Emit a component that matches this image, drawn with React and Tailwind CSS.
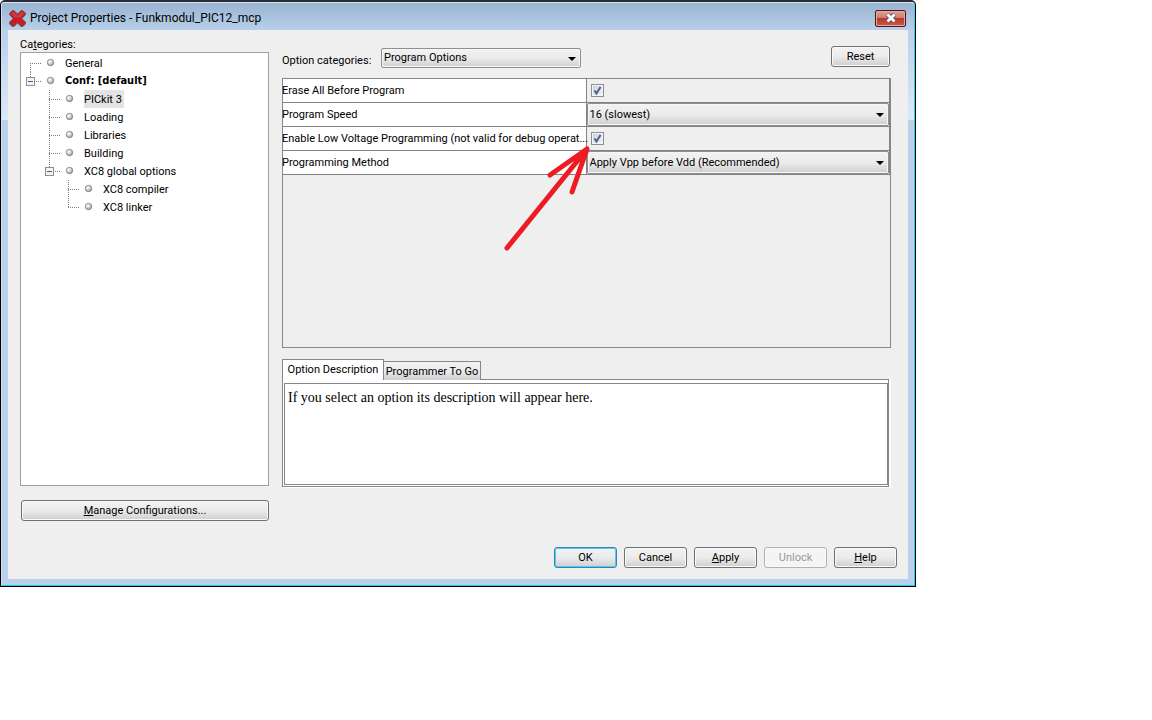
import { useState } from "react";

const tree = [
	{ label: "General", depth: 1, lines: [{ from: 9, to: 18 }] },
	{ label: "Conf: [default]", depth: 1, bold: true, expander: true, lines: [{ from: 0, to: 5 }] },
	{ label: "PICkit 3", depth: 2, lines: [null, { from: 0, to: 18 }] },
	{ label: "Loading", depth: 2, lines: [null, { from: 0, to: 18 }] },
	{ label: "Libraries", depth: 2, lines: [null, { from: 0, to: 18 }] },
	{ label: "Building", depth: 2, lines: [null, { from: 0, to: 18 }] },
	{ label: "XC8 global options", depth: 2, expander: true, lines: [null, { from: 0, to: 5 }] },
	{ label: "XC8 compiler", depth: 3, lines: [null, null, { from: 0, to: 18 }] },
	{ label: "XC8 linker", depth: 3, lines: [null, null, { from: 0, to: 10 }] },
];

const buttonClass =
	"h-[21px] rounded-[3px] border border-[#707070] bg-linear-to-b from-[#f2f2f2] from-0% via-[#ebebeb] via-50% to-[#cfcfcf] text-center leading-[18px] shadow-[inset_0_0_0_1px_#fafafa] disabled:border-[#adb2b5] disabled:from-[#f4f4f4] disabled:via-[#f4f4f4] disabled:to-[#f4f4f4] disabled:text-[#9a9a9a]";

function TreeGutter({ depth, lines, expander }) {
	const width = depth * 19;
	const x = (depth - 1) * 19 + 6;
	return (
		<svg width={width} height="18" className="shrink-0" shapeRendering="crispEdges" aria-hidden="true">
			<g stroke="#808080" strokeDasharray="1 1">
				{lines.map((line, i) =>
					line ? <line key={i} x1={i * 19 + 6.5} x2={i * 19 + 6.5} y1={line.from} y2={line.to} /> : null
				)}
				<line x1={expander ? x + 6 : x} x2={x + 12} y1="9.5" y2="9.5" />
			</g>
			{expander && (
				<g>
					<rect x={x - 3.5} y="5.5" width="8" height="8" fill="#f4f4f4" stroke="#8f8f8f" />
					<line x1={x - 2} x2={x + 3} y1="9.5" y2="9.5" stroke="#3c5a9c" />
				</g>
			)}
		</svg>
	);
}

function Bullet() {
	return (
		<svg width="9" height="18" className="ml-[3px] shrink-0" aria-hidden="true">
			<defs>
				<radialGradient id="ball" cx="0.38" cy="0.35" r="0.7">
					<stop offset="0" stopColor="#ffffff" />
					<stop offset="0.45" stopColor="#d9d9d9" />
					<stop offset="1" stopColor="#8c8c8c" />
				</radialGradient>
			</defs>
			<circle cx="4.5" cy="8.5" r="3.2" fill="url(#ball)" stroke="#7d7d7d" strokeWidth="0.8" />
		</svg>
	);
}

function TreeItem({ item, selected, onSelect }) {
	return (
		<li>
			<button type="button" onClick={onSelect} className="flex h-[18px] items-center pl-[3px] text-left">
				<TreeGutter depth={item.depth} lines={item.lines} expander={item.expander} />
				<Bullet />
				<span
					className={`ml-[10px] h-[18px] pr-[2px] whitespace-nowrap ${
						item.bold
							? "font-['DejaVu_Sans_Condensed','DejaVu_Sans',sans-serif] leading-[18px] font-bold"
							: "leading-[20px]"
					} ${selected ? "bg-[#e3e3e3]" : ""}`}
				>
					{item.label}
				</span>
			</button>
		</li>
	);
}

function Combo({ id, label, options, className }) {
	return (
		<div className={`grid ${className}`}>
			<select
				id={id}
				aria-label={label}
				className="h-full w-full appearance-none rounded-[2px] border border-[#8e8f8f] bg-linear-to-b from-[#f2f2f2] from-0% via-[#ebebeb] via-50% to-[#cfcfcf] pr-5 pl-[2px] shadow-[inset_0_0_0_1px_#f7f7f7] [grid-area:1/1]"
			>
				{options.map((option) => (
					<option key={option}>{option}</option>
				))}
			</select>
			<svg
				width="8"
				height="4"
				viewBox="0 0 8 4"
				className="pointer-events-none mt-px mr-[5px] self-center justify-self-end [grid-area:1/1]"
				aria-hidden="true"
			>
				<path d="M0 0h8L4 4z" />
			</svg>
		</div>
	);
}

function Check({ id }) {
	return (
		<span className="ml-1 grid h-[13px] w-[13px]">
			<input
				id={id}
				type="checkbox"
				defaultChecked
				className="peer m-0 h-[13px] w-[13px] appearance-none border border-[#8e8f8f] bg-linear-to-br from-[#c9ced6] to-[#f3f4f5] shadow-[inset_0_0_0_1px_#f4f4f4] [grid-area:1/1]"
			/>
			<svg
				viewBox="0 0 13 13"
				className="pointer-events-none invisible h-[13px] w-[13px] [grid-area:1/1] peer-checked:visible"
				aria-hidden="true"
			>
				<path d="M3.5 6.5 5.5 9.5 9.5 3" fill="none" stroke="#4a5f97" strokeWidth="2" />
			</svg>
		</span>
	);
}

function OptionRow({ id, label, children }) {
	return (
		<tr className="h-6">
			<th scope="row" className="border-r border-b border-[#828282] bg-white p-0 text-left font-normal">
				<label htmlFor={id} className="-mx-px block whitespace-nowrap">
					{label}
				</label>
			</th>
			<td className="border-r border-b border-[#828282] p-0">{children}</td>
		</tr>
	);
}

export default function App() {
	const [selected, setSelected] = useState("PICkit 3");
	const [tab, setTab] = useState("description");

	return (
		<div className="min-h-screen bg-white pr-[236px] font-[Roboto,'Liberation_Sans',sans-serif] text-[11px] leading-4 text-black">
			<div className="rounded-t-[5px] border border-t-2 border-black border-t-[#2b2b33] bg-[#b9d1ea]">
				<div className="rounded-t-[4px] border border-t-[#d5e4f3] border-r-[#33d1f0] border-b-[#22cdea] border-l-[#cfe0f2] bg-[linear-gradient(to_bottom,#99b4d1_0px,#b9d1ea_28px,#dbe9f8_117px,#b9d1ea_117px)] px-[6px] pb-[6px]">
					<header className="flex h-[27px] items-center gap-1 pt-[3px] pl-px">
						<svg width="17" height="17" viewBox="0 0 17 17" className="shrink-0" aria-hidden="true">
							<path
								d="M3 .8 5 .8 8.500 4 12 .8H14L16.300 3.200V4.800L12.800 8.500 16.300 12V14L14 16.300H12L8.500 13 5 16.300H3L.8 14V12L4.200 8.500 .8 4.800V3.200z"
								fill="#c41f26"
								stroke="#6b4148"
								strokeLinejoin="round"
							/>
							<path
								d="M3.500 2H4.700L8.500 5.500 12.300 2H13.500L15 3.700 11.500 7.500H5.500L2 3.700z"
								fill="#d23a3f"
							/>
						</svg>
						<h1 className="flex-1 text-[12px] leading-[18px] whitespace-nowrap">
							Project Properties - Funkmodul_PIC12_mcp
						</h1>
						<button
							type="button"
							aria-label="Close"
							className="mr-[2px] flex h-[17px] w-[31px] items-center justify-center rounded-[2px] border border-[#4b1420] bg-[linear-gradient(to_bottom,#e0a296_0%,#cf7a6c_48%,#b8392a_50%,#cc5a44_100%)] shadow-[inset_0_0_0_1px_#e3a99f]"
						>
							<svg width="12" height="10" viewBox="0 0 12 10" aria-hidden="true">
								<path d="M2.500 1.500 9.500 8.500M9.500 1.500 2.500 8.500" stroke="#4d5566" strokeWidth="4.500" />
								<path d="M2.500 1.500 9.500 8.500M9.500 1.500 2.500 8.500" stroke="#ffffff" strokeWidth="2.800" />
							</svg>
						</button>
					</header>

					<main className="bg-[#efefef] pr-[11px] pb-[11px] pl-3">
						<div className="flex gap-[13px]">
							<section className="w-[249px] shrink-0 pt-2">
								<h2 id="categories" className="leading-[14px]">
									Ca<u>t</u>egories:
								</h2>
								<ul
									aria-labelledby="categories"
									className="min-h-[434px] border border-[#a0a0a0] bg-white pt-[1px]"
								>
									{tree.map((item) => (
										<TreeItem
											key={item.label}
											item={item}
											selected={selected === item.label}
											onSelect={() => setSelected(item.label)}
										/>
									))}
								</ul>
								<button type="button" className={`${buttonClass} mt-[14px] ml-px w-[248px]`}>
									<u>M</u>anage Configurations...
								</button>
							</section>

							<section className="min-w-0 flex-1 pt-4 pr-[6px]">
								<div className="flex h-8 items-start pr-px">
									<label htmlFor="category" className="w-[99px] pt-[7px]">
										Option categories:
									</label>
									<Combo id="category" className="mt-[2px] h-5 w-[200px]" options={["Program Options"]} />
									<button type="button" className={`${buttonClass} ml-auto w-[59px]`}>
										Reset
									</button>
								</div>

								<div className="relative min-h-[270px] border border-[#828790]">
									<table className="w-full table-fixed border-separate border-spacing-0">
										<tbody>
											<OptionRow id="erase" label="Erase All Before Program">
												<Check id="erase" />
											</OptionRow>
											<OptionRow id="speed" label="Program Speed">
												<Combo id="speed" className="h-[23px]" options={["16 (slowest)"]} />
											</OptionRow>
											<OptionRow
												id="lowVoltage"
												label="Enable Low Voltage Programming (not valid for debug operat..."
											>
												<Check id="lowVoltage" />
											</OptionRow>
											<OptionRow id="method" label="Programming Method">
												<Combo
													id="method"
													className="h-[23px]"
													options={["Apply Vpp before Vdd (Recommended)"]}
												/>
											</OptionRow>
										</tbody>
									</table>
									<svg
										width="90"
										height="108"
										viewBox="0 0 90 108"
										className="pointer-events-none absolute top-[66px] left-1/2 -ml-[84px]"
										aria-hidden="true"
									>
										<path
											d="M4 103 84 4M47 30 84 4 69 47"
											fill="none"
											stroke="#ed1c24"
											strokeWidth="5"
											strokeLinecap="round"
											strokeLinejoin="round"
										/>
									</svg>
								</div>

								<div role="tablist" className="mt-[11px] flex h-[21px] items-end">
									<button
										type="button"
										role="tab"
										aria-selected={tab === "description"}
										onClick={() => setTab("description")}
										className="z-10 h-[21px] w-[102px] border border-b-0 border-[#828790] bg-white leading-[18px] whitespace-nowrap"
									>
										Option Description
									</button>
									<button
										type="button"
										role="tab"
										aria-selected={tab === "togo"}
										onClick={() => setTab("togo")}
										className="h-[19px] w-[97px] border border-b-0 border-l-0 border-[#828790] bg-linear-to-b from-[#f2f2f2] from-0% via-[#ebebeb] via-50% to-[#cfcfcf] leading-[17px] whitespace-nowrap"
									>
										Programmer To Go
									</button>
								</div>
								<div className="-mt-px mr-[2px] border border-[#828790] bg-white pt-[3px] pb-px pl-px shadow-[2px_1px_0_#ffffff]">
									<div
										role="tabpanel"
										className="min-h-[102px] border border-[#828790] px-[3px] pt-[6px] font-['Liberation_Serif',serif] text-[14px]"
									>
										If you select an option its description will appear here.
									</div>
								</div>
							</section>
						</div>

						<footer className="mt-[26px] flex justify-end gap-[7px]">
							<button
								type="button"
								className="h-[21px] w-[63px] rounded-[3px] border border-[#3c7fb1] bg-linear-to-b from-[#f2f2f2] from-0% via-[#ebebeb] via-50% to-[#cfcfcf] leading-[18px] shadow-[inset_0_0_0_1px_#48d1f2]"
							>
								OK
							</button>
							<button type="button" className={`${buttonClass} w-[63px]`}>
								Cancel
							</button>
							<button type="button" className={`${buttonClass} w-[63px]`}>
								<u>A</u>pply
							</button>
							<button type="button" disabled className={`${buttonClass} w-[63px]`}>
								Unlock
							</button>
							<button type="button" className={`${buttonClass} w-[63px]`}>
								<u>H</u>elp
							</button>
						</footer>
					</main>
				</div>
			</div>
		</div>
	);
}
